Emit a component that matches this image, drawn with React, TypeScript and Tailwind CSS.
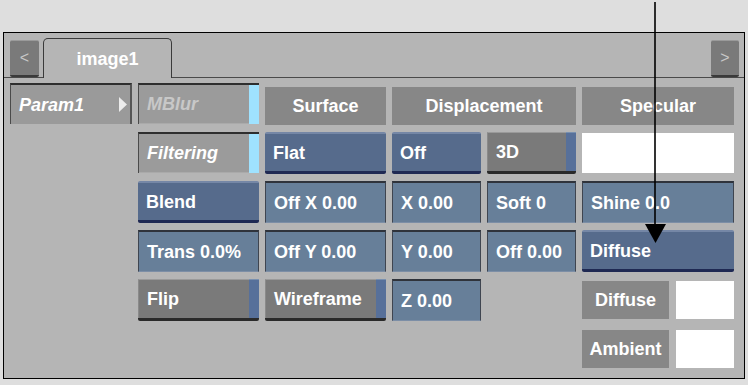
import React from "react";

const txt = "text-white font-bold text-[18px] leading-none whitespace-nowrap";

// inset value field (light blue-grey)
function Field({ label }: { label: string }) {
  return (
    <div className="h-[42px] flex items-center pl-[8px] bg-[#677f99] border-t-2 border-t-[#2f333b] border-x border-x-[#3f4550] border-b border-b-[#7c8ea6]">
      <span className={txt}>{label}</span>
    </div>
  );
}

// raised blue button
function BlueButton({ label }: { label: string }) {
  return (
    <div className="h-[42px] flex items-center pl-[8px] bg-[#566b8c] border-t-2 border-t-[#7587a6] border-b-[3px] border-b-[#1f2953] rounded-[2px]">
      <span className={txt}>{label}</span>
    </div>
  );
}

// grey toggle with coloured strip at right
function Toggle({ label }: { label: string }) {
  return (
    <div className="h-[42px] flex border-b-[3px] border-b-[#2a2a2a] rounded-[2px]">
      <div className="flex-1 flex items-center pl-[8px] bg-[#7a7a7a] border-t border-t-[#9a9a9a] border-l border-l-[#8a8a8a]">
        <span className={txt}>{label}</span>
      </div>
      <div className="w-[10px] bg-[#57709a] border-t border-t-[#7890b0]" />
    </div>
  );
}

// inset grey toggle with cyan strip (MBlur, Filtering)
function SoftToggle({ label, dim }: { label: string; dim?: boolean }) {
  return (
    <div className="h-[41px] flex border-t-2 border-t-[#2e2e2e] border-l border-l-[#4a4a4a]">
      <div className="flex-1 flex items-center pl-[8px] bg-[#9b9b9b] border-b border-b-[#aaaaaa]">
        <span className={`${dim ? "text-[#c8c8c8]" : "text-white"} italic font-bold text-[18px] leading-none`}>
          {label}
        </span>
      </div>
      <div className="w-[10px] bg-[#9fe2ff]" />
    </div>
  );
}

function Header({ label, className = "" }: { label: string; className?: string }) {
  return (
    <div className={`h-[38px] self-end flex items-center justify-center bg-[#878787] ${className}`}>
      <span className={txt}>{label}</span>
    </div>
  );
}

export default function App() {
  return (
    <div
      className="relative w-[748px] h-[385px] bg-[#dedede] pt-[32px] pl-[3px] overflow-hidden"
      style={{ fontFamily: '"Liberation Sans", Arial, sans-serif' }}
    >
      <div className="w-[742px] h-[347px] border border-black bg-[#b5b5b5]">
        {/* tab strip */}
        <div className="h-[45px] flex items-end border-b border-b-[#4a4a4a] pl-[6px] pr-[5px]">
          <div className="w-[29px] h-[37px] flex items-center justify-center bg-[#7a7a7a] border-t border-t-[#9a9a9a] border-b-2 border-b-[#3a3a3a] rounded-[2px] text-[#c8c8c8] text-[16px] leading-none">
            &lt;
          </div>
          <div className="ml-[4px] w-[129px] h-[40px] -mb-px flex items-center justify-center bg-[#b5b5b5] border border-b-0 border-[#3a3a3a] rounded-t-[5px]">
            <span className={txt}>image1</span>
          </div>
          <div className="flex-1" />
          <div className="w-[28px] h-[37px] flex items-center justify-center bg-[#7a7a7a] border-t border-t-[#9a9a9a] border-b-2 border-b-[#3a3a3a] rounded-[2px] text-[#c8c8c8] text-[16px] leading-none">
            &gt;
          </div>
        </div>

        {/* parameter grid */}
        <div className="pt-[5px] pl-[6px] grid grid-cols-[122px_121px_121px_89px_89px_152px] grid-rows-[42px_42px_42px_42px_42px_42px] gap-x-[6px] gap-y-[7px]">
          {/* row 1 */}
          <div className="h-[41px] flex items-center justify-between pl-[8px] pr-[3px] bg-[#9a9a9a] border-t-2 border-t-[#2e2e2e] border-l border-l-[#4a4a4a] border-r-2 border-r-[#555555]">
            <span className="text-white italic font-bold text-[18px] leading-none">Param1</span>
            <svg width="8" height="15" viewBox="0 0 8 15">
              <polygon points="0,0 8,7.5 0,15" fill="#ececec" />
            </svg>
          </div>
          <SoftToggle label="MBlur" dim />
          <Header label="Surface" />
          <Header label="Displacement" className="col-span-2" />
          <Header label="Specular" />

          {/* row 2 */}
          <div />
          <SoftToggle label="Filtering" />
          <BlueButton label="Flat" />
          <BlueButton label="Off" />
          <Toggle label="3D" />
          <div className="h-[40px] bg-white self-center" />

          {/* row 3 */}
          <div />
          <BlueButton label="Blend" />
          <Field label="Off X 0.00" />
          <Field label="X 0.00" />
          <Field label="Soft 0" />
          <Field label="Shine 0.0" />

          {/* row 4 */}
          <div />
          <Field label="Trans 0.0%" />
          <Field label="Off Y 0.00" />
          <Field label="Y 0.00" />
          <Field label="Off 0.00" />
          <BlueButton label="Diffuse" />

          {/* row 5 */}
          <div />
          <Toggle label="Flip" />
          <Toggle label="Wireframe" />
          <Field label="Z 0.00" />
          <div />
          <div className="flex gap-[7px] items-center">
            <div className="w-[87px] h-[38px] flex items-center justify-center bg-[#878787]">
              <span className={txt}>Diffuse</span>
            </div>
            <div className="flex-1 h-[38px] bg-white" />
          </div>

          {/* row 6 */}
          <div />
          <div />
          <div />
          <div />
          <div />
          <div className="flex gap-[7px] items-center">
            <div className="w-[87px] h-[38px] flex items-center justify-center bg-[#878787]">
              <span className={txt}>Ambient</span>
            </div>
            <div className="flex-1 h-[38px] bg-white" />
          </div>
        </div>
      </div>

      {/* callout arrow */}
      <svg className="absolute left-0 top-0 pointer-events-none" width="748" height="385">
        <line x1="655" y1="2" x2="655" y2="228" stroke="#000" strokeWidth="1.6" />
        <polygon points="645,224 666,224 655.5,243" fill="#000" />
      </svg>
    </div>
  );
}
